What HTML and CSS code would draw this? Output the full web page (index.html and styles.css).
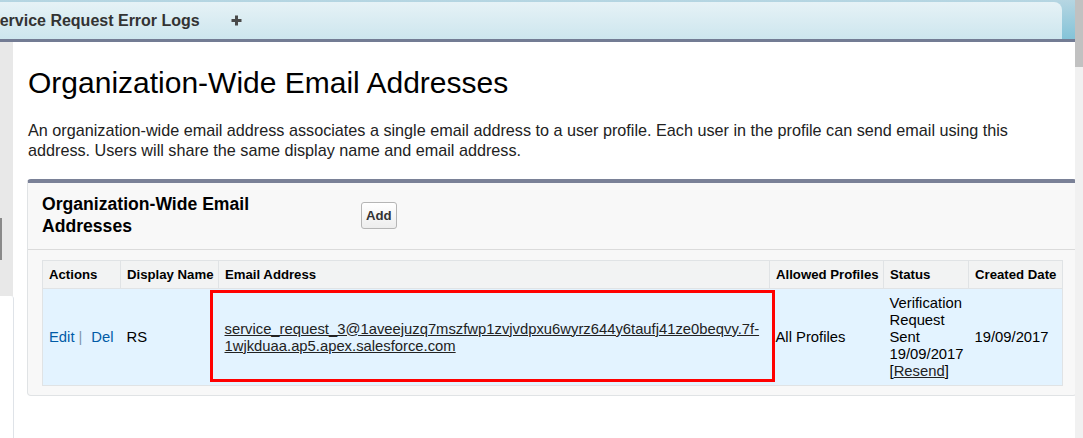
FILE: index.html
```html
<!DOCTYPE html>
<html lang="en">
<head>
    <meta charset="UTF-8">
    <title>Organization-Wide Email Addresses</title>
    <link rel="stylesheet" href="styles.css">
</head>
<body>
    <div class="tabbar">
        <div class="tab">
            <span class="tab-label">Service Request Error Logs</span>
            <span class="tab-add">
                <svg width="11" height="11" viewBox="0 0 11 11"><path d="M5.5 0.5v10M0.5 5.5h10" stroke="#4a4a4a" stroke-width="3"/></svg>
            </span>
        </div>
    </div>
    <div class="page">
        <div class="sidebar">
            <div class="sidebar-top"><div class="sidebar-handle"></div></div>
            <div class="sidebar-rest"></div>
        </div>
        <div class="main">
            <h1>Organization-Wide Email Addresses</h1>
            <p class="intro">An organization-wide email address associates a single email address to a user profile. Each user in the profile can send email using this address. Users will share the same display name and email address.</p>
            <div class="panel">
                <div class="panel-head">
                    <h2>Organization-Wide Email Addresses</h2>
                    <button class="btn-add">Add</button>
                </div>
                <div class="panel-body">
                    <table class="list">
                        <colgroup>
                            <col style="width:78px">
                            <col style="width:98px">
                            <col style="width:551px">
                            <col style="width:114px">
                            <col style="width:85px">
                            <col style="width:94px">
                        </colgroup>
                        <tr>
                            <th>Actions</th>
                            <th>Display Name</th>
                            <th>Email Address</th>
                            <th>Allowed Profiles</th>
                            <th>Status</th>
                            <th>Created Date</th>
                        </tr>
                        <tr>
                            <td><a class="action" href="#">Edit</a><span class="sep">|</span><a class="action" href="#">Del</a></td>
                            <td>RS</td>
                            <td><a class="plain" href="#">service_request_3@1aveejuzq7mszfwp1zvjvdpxu6wyrz644y6taufj41ze0beqvy.7f-<wbr>1wjkduaa.ap5.apex.salesforce.com</a></td>
                            <td>All Profiles</td>
                            <td>Verification Request Sent 19/09/2017 [<a class="plain" href="#">Resend</a>]</td>
                            <td>19/09/2017</td>
                        </tr>
                    </table>
                    <div class="highlight"></div>
                </div>
            </div>
        </div>
    </div>
    <div class="scrollbar"><div class="scrollbar-thumb"></div></div>
</body>
</html>
```

FILE: styles.css
```css
* {
    box-sizing: border-box;
}
html, body {
    margin: 0;
    height: 100%;
    overflow: hidden;
}
body {
    font-family: "Liberation Sans", Arial, sans-serif;
    background-color: #fff;
    color: #000;
    position: relative;
}
.tabbar {
    width: 1075px;
    height: 42px;
    padding-top: 2px;
    padding-right: 13px;
    background: linear-gradient(#b6d6e2, #84c3d8);
    border-bottom: 3px solid #737c94;
}
.tab {
    height: 37px;
    display: flex;
    align-items: center;
    background: linear-gradient(#e6f2f6, #cde6ee);
    border-top-right-radius: 8px;
}
.tab-label {
    margin-left: -11px;
    font-size: 16px;
    font-weight: bold;
    color: #333;
}
.tab-add {
    display: flex;
    margin-left: 31px;
    margin-top: -1px;
}
.page {
    display: flex;
    height: calc(100% - 42px);
}
.sidebar {
    width: 14px;
    flex: none;
    display: flex;
    flex-direction: column;
}
.sidebar-top {
    height: 254px;
    width: 13px;
    background-color: #e8e8e8;
    padding-top: 176px;
}
.sidebar-handle {
    width: 2px;
    height: 42px;
    background-color: #8a8a8a;
}
.sidebar-rest {
    flex: 1;
    border-right: 1px solid #dfe3e8;
    border-top-right-radius: 3px;
}
.main {
    flex: 1;
    min-width: 0;
    padding-left: 14px;
}
h1 {
    margin: 23px 0 0;
    font-size: 30px;
    line-height: 36px;
    font-weight: normal;
}
.intro {
    width: 1010px;
    margin: 19px 0 0;
    font-size: 16.2px;
    line-height: 20px;
    color: #222;
}
.panel {
    width: 1050px;
    margin: 19px 0 0 -1px;
    background-color: #f8f8f8;
    border: 1px solid #e0e3e5;
    border-top: 4px solid #7a8197;
    border-radius: 4px;
}
.panel-head {
    display: flex;
    align-items: center;
    padding: 10px 14px 12px;
    border-bottom: 1px solid #dbdbdb;
}
.panel-head h2 {
    width: 300px;
    margin: 0 19px 0 0;
    font-size: 17.6px;
    line-height: 22px;
}
.btn-add {
    height: 27px;
    padding: 0 4px;
    font-family: inherit;
    font-size: 13.2px;
    font-weight: bold;
    color: #333;
    background: linear-gradient(#fff, #ededed);
    border: 1px solid #b5b5b5;
    border-radius: 3px;
}
.panel-body {
    position: relative;
    padding: 10px 14px 9px;
}
.list {
    width: 1020px;
    table-layout: fixed;
    border-collapse: collapse;
    border: 1px solid #e0e3e5;
    font-size: 14.8px;
}
.list th {
    padding: 5px 2px 5px 6px;
    font-size: 13.2px;
    line-height: 17px;
    text-align: left;
    white-space: nowrap;
    background-color: #f2f3f3;
    border: 1px solid #e0e3e5;
}
.list td {
    padding: 6px 2px 5px 6px;
    line-height: 17px;
    vertical-align: middle;
    background-color: #e3f3ff;
}
.action {
    color: #015ba7;
    text-decoration: none;
}
.sep {
    margin: 0 9px 0 4px;
    color: #8197ad;
}
.plain {
    color: #222;
}
.highlight {
    position: absolute;
    left: 182px;
    top: 40px;
    width: 565px;
    height: 92px;
    border: 3px solid #f00;
}
.scrollbar {
    position: absolute;
    top: 0;
    right: 0;
    width: 8px;
    height: 100%;
    background-color: #f1f1f1;
}
.scrollbar-thumb {
    height: 67px;
    background-color: #c1c1c1;
}
```
